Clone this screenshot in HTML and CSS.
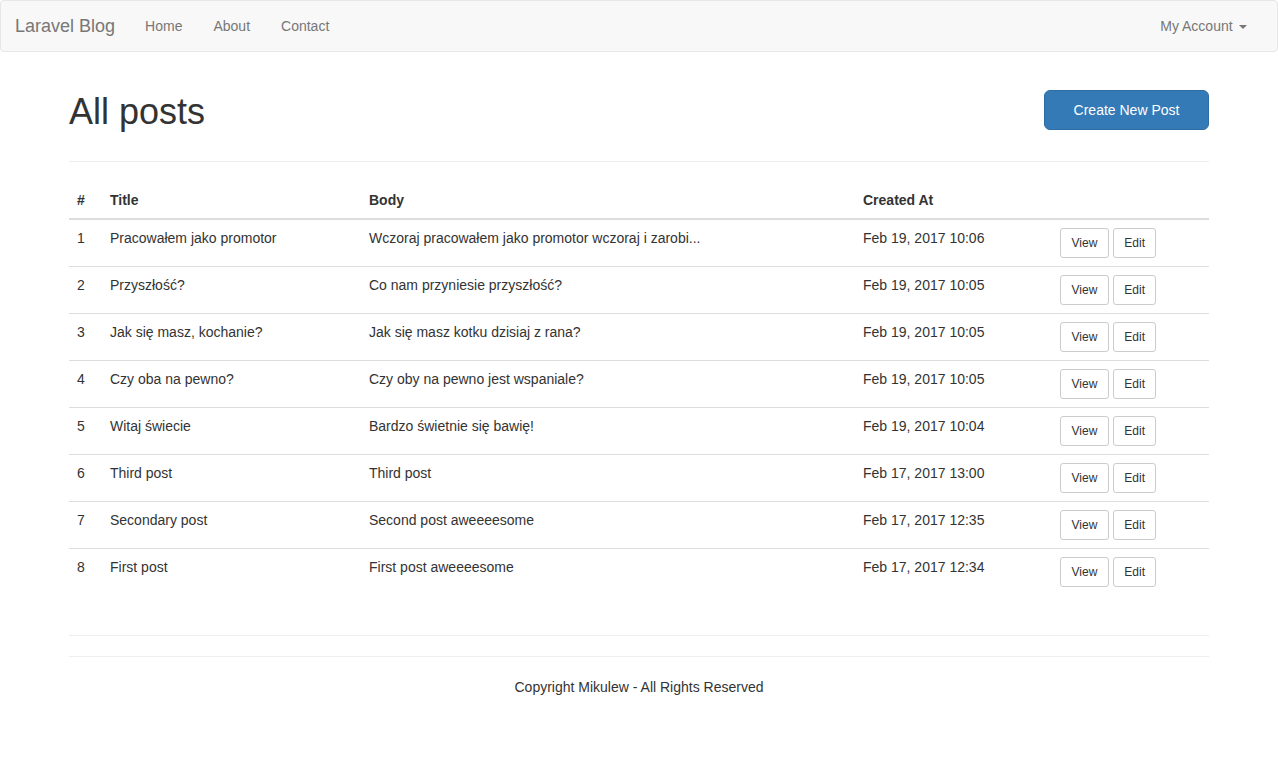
FILE: index.html
```html
<!DOCTYPE html>
<html lang="pl">
<head>
<meta charset="utf-8">
<title>Laravel Blog</title>
<link rel="stylesheet" href="styles.css">
</head>
<body>
<nav class="navbar">
  <div class="nav-left">
    <a class="brand" href="#">Laravel Blog</a>
    <a class="nav-link" href="#">Home</a>
    <a class="nav-link" href="#">About</a>
    <a class="nav-link" href="#">Contact</a>
  </div>
  <div class="nav-right">
    <a class="nav-link" href="#">My Account <span class="caret"></span></a>
  </div>
</nav>

<main class="container">
  <div class="page-head">
    <h1>All posts</h1>
    <a class="btn-primary" href="#">Create New Post</a>
  </div>
  <hr>
  <table class="posts">
    <thead>
      <tr>
        <th class="c-num">#</th>
        <th class="c-title">Title</th>
        <th class="c-body">Body</th>
        <th class="c-date">Created At</th>
        <th class="c-act"></th>
      </tr>
    </thead>
    <tbody>
      <tr><td>1</td><td>Pracowałem jako promotor</td><td>Wczoraj pracowałem jako promotor wczoraj i zarobi...</td><td>Feb 19, 2017 10:06</td><td class="actions"><a class="btn-sm" href="#">View</a><a class="btn-sm" href="#">Edit</a></td></tr>
      <tr><td>2</td><td>Przyszłość?</td><td>Co nam przyniesie przyszłość?</td><td>Feb 19, 2017 10:05</td><td class="actions"><a class="btn-sm" href="#">View</a><a class="btn-sm" href="#">Edit</a></td></tr>
      <tr><td>3</td><td>Jak się masz, kochanie?</td><td>Jak się masz kotku dzisiaj z rana?</td><td>Feb 19, 2017 10:05</td><td class="actions"><a class="btn-sm" href="#">View</a><a class="btn-sm" href="#">Edit</a></td></tr>
      <tr><td>4</td><td>Czy oba na pewno?</td><td>Czy oby na pewno jest wspaniale?</td><td>Feb 19, 2017 10:05</td><td class="actions"><a class="btn-sm" href="#">View</a><a class="btn-sm" href="#">Edit</a></td></tr>
      <tr><td>5</td><td>Witaj świecie</td><td>Bardzo świetnie się bawię!</td><td>Feb 19, 2017 10:04</td><td class="actions"><a class="btn-sm" href="#">View</a><a class="btn-sm" href="#">Edit</a></td></tr>
      <tr><td>6</td><td>Third post</td><td>Third post</td><td>Feb 17, 2017 13:00</td><td class="actions"><a class="btn-sm" href="#">View</a><a class="btn-sm" href="#">Edit</a></td></tr>
      <tr><td>7</td><td>Secondary post</td><td>Second post aweeeesome</td><td>Feb 17, 2017 12:35</td><td class="actions"><a class="btn-sm" href="#">View</a><a class="btn-sm" href="#">Edit</a></td></tr>
      <tr><td>8</td><td>First post</td><td>First post aweeeesome</td><td>Feb 17, 2017 12:34</td><td class="actions"><a class="btn-sm" href="#">View</a><a class="btn-sm" href="#">Edit</a></td></tr>
    </tbody>
  </table>
  <hr>
  <hr>
  <footer class="footer">Copyright Mikulew - All Rights Reserved</footer>
</main>
</body>
</html>
```

FILE: styles.css
```css
* { box-sizing: border-box; }
html, body { margin: 0; padding: 0; }
body {
  font-family: "Liberation Sans", Arial, Helvetica, sans-serif;
  font-size: 14px;
  line-height: 20px;
  color: #333;
  background: #fff;
}
a { text-decoration: none; }

.navbar {
  display: flex;
  justify-content: space-between;
  height: 52px;
  background: #f8f8f8;
  border: 1px solid #e7e7e7;
  border-radius: 4px;
  padding: 0 15px 0 0;
  margin-bottom: 20px;
}
.nav-left, .nav-right { display: flex; }
.brand {
  display: block;
  padding: 15px 15px 15px 14px;
  font-size: 18px;
  line-height: 20px;
  height: 50px;
  color: #777;
}
.nav-link {
  display: block;
  padding: 15px 15.5px;
  line-height: 20px;
  color: #777;
}
.nav-left .brand + .nav-link { padding-left: 15px; }
.caret {
  display: inline-block;
  width: 0;
  height: 0;
  margin-left: 2px;
  vertical-align: middle;
  border-top: 4px solid #777;
  border-left: 4px solid transparent;
  border-right: 4px solid transparent;
}

.container {
  width: 1170px;
  margin: 0 auto;
  padding: 0 15px;
}
.page-head {
  display: flex;
  justify-content: space-between;
  align-items: flex-start;
}
h1 {
  margin: 20px 0 10px;
  font-size: 36px;
  font-weight: 500;
  line-height: 39px;
  font-family: "Liberation Sans", Arial, Helvetica, sans-serif;
}
.btn-primary {
  display: block;
  width: 165px;
  height: 40px;
  margin-top: 18px;
  line-height: 38px;
  text-align: center;
  color: #fff;
  background: #337ab7;
  border: 1px solid #2e6da4;
  border-radius: 6px;
  font-size: 14px;
}
hr {
  margin: 20px 0;
  border: 0;
  border-top: 1px solid #eee;
  height: 0;
}

.posts {
  width: 100%;
  border-collapse: collapse;
  border-spacing: 0;
  margin-bottom: 40px;
}
.posts th, .posts td {
  padding: 8px;
  line-height: 20px;
  text-align: left;
  vertical-align: top;
}
.posts th {
  font-weight: bold;
  vertical-align: bottom;
  border-bottom: 2px solid #ddd;
}
.posts tbody tr + tr td { border-top: 1px solid #ddd; }
.c-num { width: 33px; }
.c-title { width: 259px; }
.c-body { width: 494px; }
.c-date { width: 197px; }
.actions { white-space: nowrap; }
.btn-sm {
  display: inline-block;
  padding: 5px 10.5px;
  font-size: 12px;
  line-height: 18px;
  color: #333;
  background: #fff;
  border: 1px solid #ccc;
  border-radius: 3px;
}
.btn-sm + .btn-sm { margin-left: 4px; }

.footer {
  text-align: center;
  padding-bottom: 20px;
}
```
